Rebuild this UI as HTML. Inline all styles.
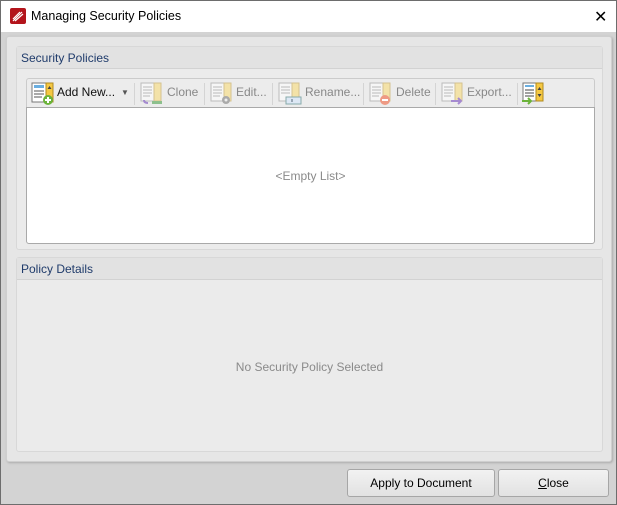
<!DOCTYPE html>
<html><head><meta charset="utf-8"><style>
*{margin:0;padding:0;box-sizing:border-box}
body{width:617px;height:505px;overflow:hidden;font-family:"Liberation Sans",sans-serif;font-size:12px;background:#d4d4d4;position:relative}
.win{position:absolute;left:0;top:0;width:617px;height:505px;border:1px solid #6d6d6d;background:#d3d3d3}
.title{position:absolute;left:0;top:0;width:615px;height:31px;background:#fff}
.tt{position:absolute;left:30px;top:8px;font-size:12.5px;color:#000}
.x{position:absolute;left:593px;top:6px;font-size:16px}
.panel{position:absolute;left:5px;top:35px;width:606px;height:426px;background:#e6e6e6;border:1px solid #cfcfcf;border-radius:3px;box-shadow:1px 1px 2px #aaa}
.grp{position:absolute;background:#ebebeb;border:1px solid #d8d8d8;border-radius:3px}
.hdr{position:absolute;left:0;top:0;right:0;height:22px;background:#e2e2e2;border-bottom:1px solid #d2d2d2;color:#1f3b6b;padding:4px 0 0 4px;font-size:12px}
.tb{position:absolute;left:25px;top:77px;width:569px;height:30px;border:1px solid #cbcbcb;border-radius:3px 3px 0 0;background:#ececec}
.bt{position:absolute;top:6px;color:#888;font-size:12px}
.sep{position:absolute;top:4px;width:1px;height:22px;background:#d4d4d4}
.ic{position:absolute;top:3px}
.list{position:absolute;left:25px;top:106px;width:569px;height:137px;background:#fff;border:1px solid #a9a9a9;border-radius:0 0 3px 3px}
.btn{position:absolute;top:468px;height:28px;border:1px solid #a6a6a6;border-radius:3px;background:linear-gradient(#f2f2f2,#e2e2e2);text-align:center;line-height:26px;color:#000;font-size:12px}
</style></head><body>
<div class="win">
<div class="title">
<svg style="position:absolute;left:9px;top:7px" width="16" height="16"><rect width="16" height="16" rx="2" fill="#b3141b"/><path d="M3 13 L12 4 M5 13 L13 6 M3 11 L10 4" stroke="#fff" stroke-width="1.2"/></svg>
<span class="tt">Managing Security Policies</span>
<span class="x">✕</span>
</div>
<div class="panel"></div>
<div class="grp" style="left:15px;top:45px;width:587px;height:204px"><div class="hdr">Security Policies</div></div>
<div class="tb">
<svg class="ic" style="left:4px" width="26" height="24"><rect x="1" y="1" width="14" height="19" fill="#fff" stroke="#777"/><rect x="3" y="3" width="10" height="3" fill="#6aaee0"/><path d="M3 9h10M3 12h10M3 15h8" stroke="#555"/><rect x="15" y="1" width="7" height="19" fill="#f5c842" stroke="#b08a20"/><path d="M16.5 7l2-3 2 3z" fill="#444"/><circle cx="17" cy="18" r="5" fill="#6bb33a"/><path d="M17 15v6M14 18h6" stroke="#fff" stroke-width="2"/></svg>
<span class="bt" style="left:30px;color:#111">Add New...</span>
<span class="bt" style="left:94px;color:#555;font-size:8px;top:9px">▼</span>
<div class="sep" style="left:107px"></div>
<svg class="ic" style="left:113px" width="24" height="24"><rect x="1" y="1" width="13" height="18" fill="#f6f6f6" stroke="#bbb"/><path d="M3 5h9M3 8h9M3 11h9M3 14h7" stroke="#bbb"/><rect x="14" y="1" width="7" height="18" fill="#f3e2a8" stroke="#d4c290"/><rect x="12" y="19" width="10" height="3" fill="#8dc08d"/><path d="M4 18q0 3 4 3" stroke="#a58ad0" stroke-width="2" fill="none"/></svg>
<span class="bt" style="left:140px">Clone</span>
<div class="sep" style="left:177px"></div>
<svg class="ic" style="left:183px" width="24" height="24"><rect x="1" y="1" width="13" height="18" fill="#f6f6f6" stroke="#bbb"/><path d="M3 5h9M3 8h9M3 11h9M3 14h7" stroke="#bbb"/><rect x="14" y="1" width="7" height="18" fill="#f3e2a8" stroke="#d4c290"/><circle cx="16" cy="18" r="4" fill="#aaa"/><circle cx="16" cy="18" r="1.5" fill="#eee"/></svg>
<span class="bt" style="left:209px">Edit...</span>
<div class="sep" style="left:245px"></div>
<svg class="ic" style="left:251px" width="26" height="24"><rect x="1" y="1" width="13" height="18" fill="#f6f6f6" stroke="#bbb"/><path d="M3 5h9M3 8h9M3 11h9" stroke="#bbb"/><rect x="14" y="1" width="7" height="18" fill="#f3e2a8" stroke="#d4c290"/><rect x="8" y="15" width="15" height="7" fill="#dde8f5" stroke="#8aa"/><path d="M14 17v3" stroke="#567"/></svg>
<span class="bt" style="left:278px">Rename...</span>
<div class="sep" style="left:336px"></div>
<svg class="ic" style="left:342px" width="24" height="24"><rect x="1" y="1" width="13" height="18" fill="#f6f6f6" stroke="#bbb"/><path d="M3 5h9M3 8h9M3 11h9M3 14h7" stroke="#bbb"/><rect x="14" y="1" width="7" height="18" fill="#f3e2a8" stroke="#d4c290"/><circle cx="16" cy="18" r="5" fill="#ee9a84"/><path d="M13 18h6" stroke="#fff" stroke-width="2"/></svg>
<span class="bt" style="left:369px">Delete</span>
<div class="sep" style="left:408px"></div>
<svg class="ic" style="left:414px" width="24" height="24"><rect x="1" y="1" width="13" height="18" fill="#f6f6f6" stroke="#bbb"/><path d="M3 5h9M3 8h9M3 11h9M3 14h7" stroke="#bbb"/><rect x="14" y="1" width="7" height="18" fill="#f3e2a8" stroke="#d4c290"/><path d="M10 19h10M17 16l3 3-3 3" stroke="#a58ad0" stroke-width="2" fill="none"/></svg>
<span class="bt" style="left:440px">Export...</span>
<div class="sep" style="left:490px"></div>
<svg class="ic" style="left:495px" width="24" height="24"><rect x="1" y="1" width="13" height="18" fill="#fff" stroke="#777"/><rect x="3" y="3" width="9" height="2" fill="#6aaee0"/><path d="M3 8h9M3 11h9M3 14h9" stroke="#444"/><rect x="14" y="1" width="7" height="18" fill="#f5c842" stroke="#b08a20"/><path d="M15.5 8l2-3 2 3zM15.5 12l2 3 2-3z" fill="#444"/><path d="M0 19h9M6 16l3 3-3 3" stroke="#6bb33a" stroke-width="2" fill="none"/></svg>
</div>
<div class="list"><div style="position:absolute;left:0;right:0;top:61px;text-align:center;color:#8a8a8a">&lt;Empty List&gt;</div></div>
<div class="grp" style="left:15px;top:256px;width:587px;height:195px"><div class="hdr">Policy Details</div>
<div style="position:absolute;left:0;right:0;top:102px;text-align:center;color:#8a8a8a">No Security Policy Selected</div></div>
<div class="btn" style="left:346px;width:148px">Apply to Document</div>
<div class="btn" style="left:497px;width:111px"><u>C</u>lose</div>
</div>
</body></html>
